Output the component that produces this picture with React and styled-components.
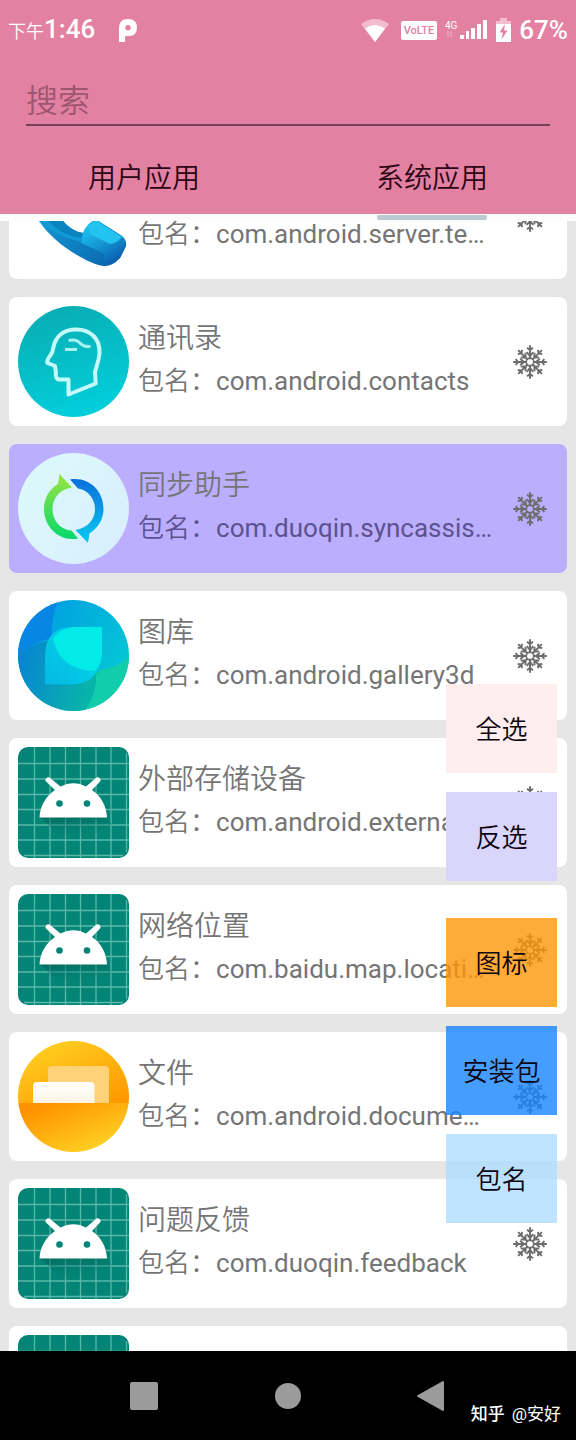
import React, { useLayoutEffect, useRef, useState } from 'react';
import styled, { createGlobalStyle } from 'styled-components';

const GlobalStyle = createGlobalStyle`
  * {
    box-sizing: border-box;
  }
  body {
    margin: 0;
    background: #e6e6e6;
    font-family: Roboto, "Noto Sans CJK SC", sans-serif;
  }
  button, input {
    font-family: inherit;
  }
`

const Screen = styled.div`
  display: flex;
  flex-direction: column;
  height: 100vh;
`

const Header = styled.header`
  background: #e381a2;
`

const StatusBar = styled.div`
  display: flex;
  align-items: center;
  justify-content: space-between;
  height: 60px;
  padding: 0 8px;
  color: #fff;
`

const StatusSide = styled.div`
  display: flex;
  align-items: center;
  gap: ${(p) => p.$gap}px;
`

const Clock = styled.div`
  display: flex;
  align-items: baseline;
  font-size: 26px;
  line-height: 32px;
  font-weight: 500;
`

const Period = styled.span`
  font-size: 18px;
  font-weight: 350;
`

const Volte = styled.span`
  padding: 0 3px;
  border-radius: 2px;
  background: #fff;
  color: #e381a2;
  font-size: 11px;
  line-height: 19px;
  font-weight: 500;
`

const Percent = styled.span`
  font-size: 26px;
  line-height: 32px;
  font-weight: 500;
`

const SearchRow = styled.div`
  padding: 14px 26px 16px;
`

const SearchInput = styled.input`
  display: block;
  width: 100%;
  height: 52px;
  padding: 4px 0 0;
  border: 0;
  border-bottom: 2px solid #75405a;
  border-radius: 0;
  outline: none;
  background: transparent;
  color: #2a0818;
  font-size: 32px;
  font-weight: 350;
  &::placeholder {
    color: #9d566f;
    opacity: 1;
  }
`

const Tabs = styled.div`
  display: grid;
  grid-template-columns: 1fr 1fr;
  background: #fcfcfc;
`

const Tab = styled.button`
  display: flex;
  flex-direction: column;
  align-items: center;
  padding: 0;
  border: 0;
  background: transparent;
  color: #2b0616;
  font-size: 28px;
  font-weight: 350;
`

const TabLabel = styled.span`
  width: 100%;
  padding-top: 2px;
  line-height: 70px;
  background: #e381a2;
`

const TabLine = styled.span`
  width: 110px;
  height: 5px;
  margin: 1px 0;
  border-radius: 2px;
  background: ${(p) => (p.$on ? '#b9cbd0' : 'transparent')};
`

const Body = styled.main`
  position: relative;
  flex: 1;
  min-height: 0;
`

const List = styled.ul`
  height: 100%;
  margin: 0;
  padding: 0 9px;
  overflow-y: auto;
  scrollbar-width: none;
  list-style: none;
`

const Card = styled.li`
  display: flex;
  align-items: center;
  margin: 9px 0 18px;
  padding: 9px;
  border-radius: 8px;
  background: ${(p) => (p.$selected ? '#bbaefe' : '#fff')};
  color: ${(p) => (p.$selected ? '#5d5290' : '#757575')};
`

const AppIcon = styled.svg`
  flex: none;
  width: 111px;
  height: 111px;
`

const Info = styled.div`
  flex: 1;
  min-width: 0;
  padding: 0 0 3px 9px;
`

const AppName = styled.div`
  color: #757575;
  font-size: 28px;
  line-height: 43px;
  font-weight: 350;
`

const PackageName = styled.div`
  overflow: hidden;
  font-size: 26px;
  line-height: 43px;
  white-space: nowrap;
  text-overflow: ellipsis;
`

const Prefix = styled.span`
  font-weight: 350;
`

const FreezeButton = styled.button`
  display: flex;
  flex: none;
  margin: 0 11px 0 19px;
  padding: 0;
  border: 0;
  background: transparent;
  color: #6c6c6c;
`

const Actions = styled.div`
  position: absolute;
  right: 19px;
  bottom: 128px;
  display: flex;
  flex-direction: column;
  gap: 37px;
`

const ActionGroup = styled.div`
  display: flex;
  flex-direction: column;
  gap: 19px;
`

const ActionButton = styled.button`
  width: 111px;
  height: 89px;
  padding: 0 0 3px;
  border: 0;
  background: ${(p) => p.$color};
  color: #0c0410;
  font-size: 26px;
  font-weight: 350;
`

const NavBar = styled.nav`
  position: relative;
  display: flex;
  height: 89px;
  padding: 0 12.5%;
  background: #000;
`

const NavButton = styled.button`
  display: flex;
  flex: 1;
  align-items: center;
  justify-content: center;
  padding: 0;
  border: 0;
  background: transparent;
`

const Watermark = styled.div`
  position: absolute;
  right: 15px;
  bottom: 14px;
  color: #fff;
  font-size: 17px;
  line-height: 24px;
`

const Brand = styled.span`
  margin-right: 7px;
  font-weight: 500;
`

const PhoneIcon = () => (
  <AppIcon viewBox="0 0 111 111">
    <defs>
      <linearGradient id="phoneBody" x1="0" y1="0" x2="1" y2="1">
        <stop offset="0" stopColor="#29b4ee" />
        <stop offset="0.6" stopColor="#0e83c4" />
        <stop offset="1" stopColor="#0a62ad" />
      </linearGradient>
      <linearGradient id="phoneEnd" x1="0" y1="0" x2="0.6" y2="1">
        <stop offset="0" stopColor="#22cdf6" />
        <stop offset="0.5" stopColor="#169fda" />
        <stop offset="1" stopColor="#0b60ad" />
      </linearGradient>
    </defs>
    <path d="M8 12 24 3 43 22 35 38C36 49 39 56 45 62C51 69 58 73 65 74L67 70Q73 61 79 61L104 77Q109 82 108 87L102 99Q94 108 85 107Q78 106 68 101C48 91 31 77 21 62C11 46 4 30 8 12Z" fill="url(#phoneBody)" />
    <path d="M21 62 45 62C51 69 57 73 65 74L63 83C47 79 32 72 21 62Z" fill="#119ad5" />
    <path d="M30 62 45 62C51 69 57 73 65 74L63 79C49 77 39 71 30 62Z" fill="#0b83be" />
    <path d="M65 74 67 70Q73 61 79 61L105 78Q109 82 108 87L102 99Q94 106 85 107L87 95 63 84Z" fill="url(#phoneEnd)" />
    <path d="M70 68Q75 62 80 63L104 78Q98 85 92 85L72 75Z" fill="#22c3ef" />
  </AppIcon>
)

const ContactsIcon = () => (
  <AppIcon viewBox="0 0 111 111">
    <defs>
      <linearGradient id="contactsBg" x1="0.3" y1="0" x2="0.6" y2="1">
        <stop offset="0" stopColor="#08adb2" />
        <stop offset="1" stopColor="#02cfdc" />
      </linearGradient>
    </defs>
    <circle cx="55.5" cy="55.5" r="55.5" fill="url(#contactsBg)" />
    <path d="M35.500 41C38 30 46 23.500 58 23.500C73 23.500 82 33 81.500 47C81 55 78.500 60 77 66L77.700 77.500 50.500 88.500 50.500 73.500 40 73.500Q37 71 38 67L37 60 29.500 57Q28.500 54 32 50Q35 46 35.500 41Z" fill="none" stroke="#c4fbfa" strokeWidth="4" strokeLinejoin="round" />
    <path d="M50.500 34.500Q58 33 62 37Q65 41 72.500 40.500M47 43.500H59" fill="none" stroke="#a8f1f0" strokeWidth="3" />
  </AppIcon>
)

const SyncIcon = () => (
  <AppIcon viewBox="0 0 111 111">
    <defs>
      <linearGradient id="syncBg" x1="0" y1="0" x2="1" y2="0.6">
        <stop offset="0" stopColor="#ddfafb" />
        <stop offset="1" stopColor="#d9effd" />
      </linearGradient>
      <linearGradient id="syncGreen" x1="0" y1="0" x2="0" y2="1">
        <stop offset="0" stopColor="#9be541" />
        <stop offset="1" stopColor="#06d86c" />
      </linearGradient>
      <linearGradient id="syncBlue" x1="0" y1="0" x2="0" y2="1">
        <stop offset="0" stopColor="#0a6fdc" />
        <stop offset="1" stopColor="#08cbf1" />
      </linearGradient>
    </defs>
    <circle cx="55.5" cy="55.5" r="55.5" fill="url(#syncBg)" />
    <path d="M41.500 21 54 34.500C42 36 34.500 45 34.500 56C34.500 68 43 77 53.500 77.500L60 85.500C41 89 26 74 26 56C26 45 31.500 36 40 31Z" fill="url(#syncGreen)" />
    <path d="M70 90 57.500 77C69 75 77 67 77 56C77 45 69 36.500 60 35.500L52 26.500C70 23.500 85.500 37 85.500 56C85.500 66 80 75 71.500 80.500Z" fill="url(#syncBlue)" />
  </AppIcon>
)

const GalleryIcon = () => (
  <AppIcon viewBox="0 0 111 111">
    <defs>
      <clipPath id="galleryClip">
        <circle cx="55.5" cy="55.5" r="55.5" />
      </clipPath>
      <linearGradient id="gallerySky" x1="0" y1="0" x2="1" y2="0.6">
        <stop offset="0.2" stopColor="#009fe0" />
        <stop offset="1" stopColor="#06c8d6" />
      </linearGradient>
      <linearGradient id="galleryLow" x1="0" y1="0" x2="1" y2="0.3">
        <stop offset="0" stopColor="#0781d6" />
        <stop offset="1" stopColor="#08b3aa" />
      </linearGradient>
      <linearGradient id="galleryLeaf" x1="0" y1="1" x2="1" y2="0">
        <stop offset="0" stopColor="#05b7e4" />
        <stop offset="1" stopColor="#02dfe6" />
      </linearGradient>
    </defs>
    <g clipPath="url(#galleryClip)">
      <rect width="111" height="111" fill="url(#gallerySky)" />
      <path d="M0 0H42Q33 12 34 38Q15 42 0 55Z" fill="#0786e6" />
      <path d="M0 55Q16 42 34 40Q42 72 80 70Q77 100 66 111H0Z" fill="url(#galleryLow)" />
      <path d="M82 70Q99 68 111 57V111H66Q79 96 78 74Z" fill="#11cdaa" />
      <path d="M27 84.500V56Q27 27 56 27H84V56Q80 84.500 54 84.500Z" fill="url(#galleryLeaf)" />
      <path d="M35 39Q43 27 59 27H84V56Q82 66 77 71Q42 70 35 39Z" fill="#02ebe8" />
    </g>
  </AppIcon>
)

const RobotIcon = () => (
  <AppIcon viewBox="0 0 111 111">
    <defs>
      <linearGradient id="robotShadow" x1="0" y1="0" x2="0.3" y2="1">
        <stop offset="0" stopColor="#00594e" stopOpacity="0.6" />
        <stop offset="1" stopColor="#008577" stopOpacity="0" />
      </linearGradient>
    </defs>
    <rect width="111" height="111" rx="10" fill="#028576" />
    <path d="M16.500 0V111M32 0V111M47.500 0V111M62.500 0V111M78 0V111M93 0V111M108.500 6V105M0 16.500H111M0 32H111M0 47.500H111M0 62.500H111M0 78H111M0 93H111M6 108.500H105" stroke="#5bb8a9" strokeWidth="1.300" />
    <path d="M22 70H89L94 78 70 94H48Z" fill="url(#robotShadow)" />
    <path d="M21.500 70.500C22 59 28 49 37 43L27.500 34A3 3 0 0 1 31.500 30.500L42.500 39.500C51 35 60 35 68 39.500L78.500 30.500A3 3 0 0 1 82.500 34L74 43C83 49 88.500 59 89 70.500Z" fill="#fff" />
    <circle cx="41.500" cy="56.500" r="3.300" fill="#028576" />
    <circle cx="69" cy="56.500" r="3.300" fill="#028576" />
  </AppIcon>
)

const FilesIcon = () => (
  <AppIcon viewBox="0 0 111 111">
    <defs>
      <clipPath id="filesClip">
        <circle cx="55.5" cy="55.5" r="55.5" />
      </clipPath>
      <linearGradient id="filesTop" x1="0.1" y1="0" x2="0.9" y2="1">
        <stop offset="0.1" stopColor="#ffce1f" />
        <stop offset="1" stopColor="#ff9800" />
      </linearGradient>
      <linearGradient id="filesBottom" x1="0.1" y1="0" x2="0.8" y2="0.8">
        <stop offset="0.1" stopColor="#ff9200" />
        <stop offset="1" stopColor="#ffcd20" />
      </linearGradient>
      <linearGradient id="filesSheet" x1="0" y1="0" x2="0" y2="1">
        <stop offset="0" stopColor="#fff" />
        <stop offset="1" stopColor="#fff4e2" />
      </linearGradient>
    </defs>
    <g clipPath="url(#filesClip)">
      <rect width="111" height="62" fill="url(#filesTop)" />
      <path d="M30 62V29Q30 25 34 25H87Q91 25 91 29V62Z" fill="#ffd27a" />
      <path d="M15 62V45Q15 41 19 41H72Q76.500 41 76.500 45V62Z" fill="url(#filesSheet)" />
      <rect y="62" width="111" height="49" fill="url(#filesBottom)" />
    </g>
  </AppIcon>
)

const Snowflake = () => (
  <svg width="34" height="34" viewBox="-17 -17 34 34" fill="none" stroke="currentColor" strokeWidth="1.900">
    {[0, 45, 90, 135, 180, 225, 270, 315].map((angle) => (
      <path
        key={angle}
        transform={`rotate(${angle})`}
        d="M0 -3.800V-16.800M-3 -14.300 0 -12 3 -14.300M-3.300 -9.800 0 -6 3.300 -9.800M-1.600 -3.800H1.600"
      />
    ))}
  </svg>
)

const ParkingIcon = () => (
  <svg width="18" height="23" viewBox="0 0 18 23">
    <path d="M0 23V9Q0 0 9 0Q18 0 18 8.500Q18 17 10 17H7Q6 17 6 18.500V23ZM9 6A2.700 2.700 0 1 0 9 11.400A2.700 2.700 0 1 0 9 6Z" fill="#fff" fillRule="evenodd" />
  </svg>
)

const WifiIcon = () => (
  <svg width="32" height="23" viewBox="0 0 32 23">
    <path d="M0 5Q14 -5 28 5L14 23Z" fill="#f4bdce" />
    <path d="M4 9.500Q14 2.500 24 9.500L14 23Z" fill="#fff" />
  </svg>
)

const SignalIcon = () => (
  <svg width="43" height="22" viewBox="0 0 43 22">
    <text x="0" y="10" fill="#fff" fontSize="10">4G</text>
    <path d="M3 12V18M6 12V18" stroke="#eea6bd" strokeWidth="1.500" />
    <path d="M15 16H19V20H15ZM21 12H24V20H21ZM26 9H30V20H26ZM32 5H36V20H32ZM38 1H42V20H38Z" fill="#fff" />
  </svg>
)

const BatteryIcon = () => (
  <svg width="15" height="24" viewBox="0 0 15 24">
    <path d="M0 3H4V0H11V3H15V7H0Z" fill="#f4bdce" />
    <path d="M0 6H15V24H0Z" fill="#fff" />
    <path d="M9 6 3.500 14.500H7L5.500 21.500 11.500 12.500H8Z" fill="#e381a2" />
  </svg>
)

const apps = [
  { name: '电话', pkg: 'com.android.server.temanager', icon: PhoneIcon },
  { name: '通讯录', pkg: 'com.android.contacts', icon: ContactsIcon },
  { name: '同步助手', pkg: 'com.duoqin.syncassistant', icon: SyncIcon, selected: true },
  { name: '图库', pkg: 'com.android.gallery3d', icon: GalleryIcon },
  { name: '外部存储设备', pkg: 'com.android.externalstorage', icon: RobotIcon },
  { name: '网络位置', pkg: 'com.baidu.map.location', icon: RobotIcon },
  { name: '文件', pkg: 'com.android.documentsui', icon: FilesIcon },
  { name: '问题反馈', pkg: 'com.duoqin.feedback', icon: RobotIcon },
  { name: '系统界面', pkg: 'com.android.systemui', icon: RobotIcon },
]

const tabs = ['用户应用', '系统应用']

const App = () => {
  const [tab, setTab] = useState(1);
  const [keyword, setKeyword] = useState('');
  const listRef = useRef(null);

  // the list opens a little way down, under the tabs
  useLayoutEffect(() => {
    listRef.current.scrollTop = 80;
  }, [])

  return (
    <Screen>
      <GlobalStyle />
      <Header>
        <StatusBar>
          <StatusSide $gap={24}>
            <Clock><Period>下午</Period>1:46</Clock>
            <ParkingIcon />
          </StatusSide>
          <StatusSide $gap={8}>
            <WifiIcon />
            <Volte>VoLTE</Volte>
            <SignalIcon />
            <BatteryIcon />
            <Percent>67%</Percent>
          </StatusSide>
        </StatusBar>
        <SearchRow>
          <SearchInput
            type="text"
            aria-label="搜索"
            placeholder="搜索"
            value={keyword}
            onChange={(e) => setKeyword(e.target.value)}
          />
        </SearchRow>
        <Tabs role="tablist">
          {tabs.map((label, i) => (
            <Tab key={label} type="button" role="tab" aria-selected={tab === i} onClick={() => setTab(i)}>
              <TabLabel>{label}</TabLabel>
              <TabLine $on={tab === i} />
            </Tab>
          ))}
        </Tabs>
      </Header>
      <Body>
        <List ref={listRef}>
          {apps.map(({ name, pkg, icon: Icon, selected }) => (
            <Card key={pkg} $selected={selected}>
              <Icon />
              <Info>
                <AppName>{name}</AppName>
                <PackageName><Prefix>包名：</Prefix>{pkg}</PackageName>
              </Info>
              <FreezeButton type="button" aria-label={`冻结 ${name}`}>
                <Snowflake />
              </FreezeButton>
            </Card>
          ))}
        </List>
        <Actions>
          <ActionGroup>
            <ActionButton type="button" $color="#ffeeed">全选</ActionButton>
            <ActionButton type="button" $color="#dad5fb">反选</ActionButton>
          </ActionGroup>
          <ActionGroup>
            <ActionButton type="button" $color="rgba(255, 150, 8, 0.8)">图标</ActionButton>
            <ActionButton type="button" $color="rgba(22, 134, 255, 0.8)">安装包</ActionButton>
            <ActionButton type="button" $color="rgba(175, 221, 255, 0.8)">包名</ActionButton>
          </ActionGroup>
        </Actions>
      </Body>
      <NavBar>
        <NavButton type="button" aria-label="最近任务">
          <svg width="28" height="28"><rect width="28" height="28" rx="2" fill="#9b9b9b" /></svg>
        </NavButton>
        <NavButton type="button" aria-label="主页">
          <svg width="26" height="26"><circle cx="13" cy="13" r="13" fill="#9b9b9b" /></svg>
        </NavButton>
        <NavButton type="button" aria-label="返回">
          <svg width="30" height="30"><path d="M1 15 26 1V29Z" fill="#9b9b9b" stroke="#9b9b9b" strokeWidth="2" strokeLinejoin="round" /></svg>
        </NavButton>
        <Watermark><Brand>知乎</Brand>@安好</Watermark>
      </NavBar>
    </Screen>
  )
}

export default App
